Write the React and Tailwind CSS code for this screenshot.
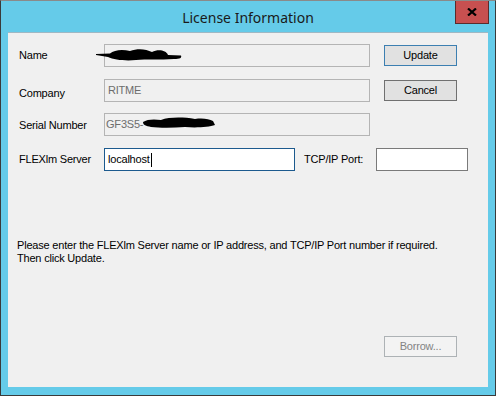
import React from 'react';

const FONT = { fontFamily: '"Liberation Sans", Arial, sans-serif' };

const Label = ({ children, className = '' }) => (
    <div className={`text-[11px] text-black tracking-[-0.2px] ${className}`}>{children}</div>
);

const Field = ({ children, className = '' }) => (
    <div className={`h-[23px] border flex items-center text-[11px] tracking-[-0.2px] ${className}`}>
        {children}
    </div>
);

const WinButton = ({ children, className = '' }) => (
    <div className={`w-[73px] h-[21px] border flex items-center justify-center text-[11px] tracking-[-0.2px] ${className}`}>
        {children}
    </div>
);

export default function App() {
    return (
        <div className="w-[496px] h-[396px] bg-[#65cbe9] border border-[#3a3a3a] border-t-[#8a8a8a] flex flex-col" style={FONT}>
            {/* Title bar */}
            <div className="relative h-[31px] shrink-0 flex items-center justify-center">
                <span className="text-[14px] text-[#1a1a1a] mt-[2px]" style={{ fontFamily: '"Noto Sans", "Open Sans", sans-serif' }}>
                    License Information
                </span>
                <div className="absolute right-[6px] top-0 w-[34px] h-[23px] bg-[#c75050] border border-[#5a2c2c] border-t-0 flex items-center justify-center">
                    <svg width="10" height="8" viewBox="0 0 10 8">
                        <path d="M1 0.5 L9 7.5 M9 0.5 L1 7.5" stroke="#000" strokeWidth="2.2" />
                    </svg>
                </div>
            </div>

            {/* Client area */}
            <div className="relative mx-[7px] h-[355px] bg-[#f0f0f0] border-t border-[#9fb8c4] pl-[11px] pt-[11px]">
                <div className="flex items-center">
                    <Label className="w-[85px]">Name</Label>
                    <Field className="w-[266px] pl-[3px] bg-[#f0f0f0] border-[#b4b4b4]" />
                    <WinButton className="ml-[14px] bg-[#e1e1e1] border-[#3c7fb1] text-black">Update</WinButton>
                </div>
                <div className="flex items-center mt-[12px]">
                    <Label className="w-[85px] relative top-[3px]">Company</Label>
                    <Field className="w-[266px] pl-[3px] bg-[#f0f0f0] border-[#b4b4b4] text-[#6d6d6d]">RITME</Field>
                    <WinButton className="ml-[14px] bg-[#e1e1e1] border-[#707070] text-black">Cancel</WinButton>
                </div>
                <div className="flex items-center mt-[11px]">
                    <Label className="w-[85px] relative top-[1px]">Serial Number</Label>
                    <Field className="w-[266px] pl-[1px] bg-[#f0f0f0] border-[#b4b4b4] text-[#6d6d6d]">GF3S5-</Field>
                </div>
                <div className="flex items-center mt-[12px]">
                    <Label className="w-[85px]">FLEXlm Server</Label>
                    <Field className="w-[191px] pl-[3px] bg-white border-[#1c5a8e] text-black">
                        localhost
                        <span className="inline-block w-px h-[14px] bg-black ml-px" />
                    </Field>
                    <Label className="ml-[9px] w-[72px]">TCP/IP Port:</Label>
                    <Field className="w-[92px] bg-white border-[#7a7a7a]" />
                </div>

                <div className="mt-[68px] -ml-[2px] text-[11px] leading-[13px] text-black tracking-[-0.2px]">
                    <p>Please enter the FLEXlm Server name or IP address, and TCP/IP Port number if required.</p>
                    <p>Then click Update.</p>
                </div>

                <div className="flex justify-end pr-[31px] mt-[71px]">
                    <WinButton className="bg-[#f3f3f3] border-[#adb2b5] text-[#838383]">Borrow...</WinButton>
                </div>

                {/* redaction marks */}
                <svg className="absolute left-[88px] top-[14px]" width="88" height="16" viewBox="0 0 88 16">
                    <path d="M0 7 L14 6.5 C18 3 26 2 34 4 C42 1 50 2 56 5 C62 2 70 3 72 8 L85 8.5 C86 11 84 12 78 12 C64 13 50 12 40 13 C30 14 18 13 12 10 L0 8 Z" fill="#000" />
                </svg>
                <svg className="absolute left-[135px] top-[83px]" width="72" height="13" viewBox="0 0 72 13">
                    <path d="M0 6 C4 3 12 3 18 4 C26 1 40 1 52 3 C60 2 66 3 70 5 L72 9 C66 11 54 12 42 11 C30 12 16 12 8 11 C3 10 0 9 0 6 Z" fill="#000" />
                </svg>
            </div>
        </div>
    );
}
